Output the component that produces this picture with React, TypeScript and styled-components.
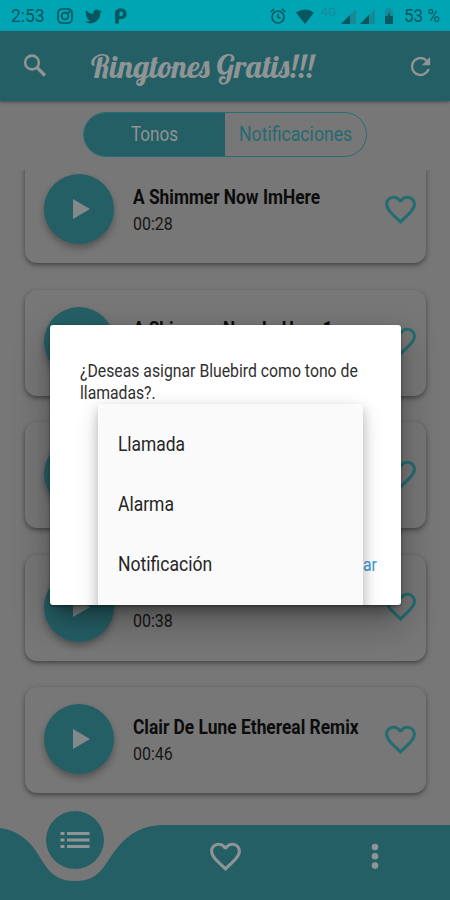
import React, { useLayoutEffect, useRef, useState } from "react";
import styled, { createGlobalStyle } from "styled-components";

const teal = "#255f66";
const grey = "#777777";
const pale = "#8f9495";
const statusInk = "#075660";

const GlobalStyle = createGlobalStyle`
  *, *::before, *::after { box-sizing: border-box; }
  body { margin: 0; background: ${grey}; font-family: Roboto, "Liberation Sans", sans-serif; }
  svg { display: block; flex: none; }
`;

const Screen = styled.div`
  position: relative;
  width: 450px;
  height: 900px;
  overflow: hidden;
  display: flex;
  flex-direction: column;
  background: ${grey};
`;

const FitBox = styled.span<{ $width: number }>`
  display: block;
  flex: none;
  width: ${(p) => p.$width}px;
  white-space: nowrap;
`;

const FitInner = styled.span`
  display: inline-block;
  transform-origin: 0 50%;
`;

/* Condenses a line of text horizontally to the width of its slot. */
function Fit({ width, children }: { width: number; children: string }) {
  const ref = useRef<HTMLSpanElement>(null);
  const [scale, setScale] = useState(1);
  useLayoutEffect(() => {
    if (ref.current) setScale(width / ref.current.offsetWidth);
  }, [width, children]);
  return (
    <FitBox $width={width}>
      <FitInner ref={ref} style={{ transform: `scaleX(${scale})` }}>
        {children}
      </FitInner>
    </FitBox>
  );
}

const StatusBar = styled.div`
  flex: none;
  height: 31px;
  padding: 1px 10px 0 11px;
  display: flex;
  align-items: center;
  justify-content: space-between;
  background: #00a5b4;
  color: ${statusInk};
  font-size: 18.5px;
`;

const StatusGroup = styled.div<{ $gap: number }>`
  display: flex;
  align-items: center;
  gap: ${(p) => p.$gap}px;
`;

const NetworkLabel = styled.span`
  font-size: 11px;
  line-height: 11px;
  margin-top: -7px;
  color: #168b98;
`;

const Header = styled.header`
  flex: none;
  height: 70px;
  padding: 0 15px 0 22px;
  display: flex;
  align-items: center;
  background: ${teal};
  box-shadow: 0 1px 3px rgba(0, 0, 0, 0.4);
  color: ${pale};
`;

const Title = styled.h1`
  margin: 0 auto 0 42px;
  font: normal 400 32px/40px "Lobster", "Liberation Serif", serif;
`;

const Tabs = styled.div`
  flex: none;
  align-self: center;
  width: 284px;
  height: 45px;
  margin: 11px 0 13px;
  display: flex;
  border: 1px solid #256e74;
  border-radius: 23px;
  overflow: hidden;
`;

const Tab = styled.div<{ $active?: boolean }>`
  flex: 1;
  display: flex;
  align-items: center;
  justify-content: center;
  padding-bottom: 1px;
  font-size: 20px;
  color: ${(p) => (p.$active ? pale : "#256a70")};
  background: ${(p) => (p.$active ? teal : "transparent")};
`;

const List = styled.div`
  flex: none;
  height: 655px;
  overflow: hidden;
  display: flex;
  flex-direction: column;
  justify-content: flex-end;
  gap: 26.5px;
  padding: 0 24px 32px 25px;
`;

const Card = styled.article`
  flex: none;
  height: 106px;
  padding: 0 7px 2px 19px;
  display: flex;
  align-items: center;
  border-radius: 12px;
  background: ${grey};
  box-shadow: 0 2px 4px rgba(0, 0, 0, 0.38), 0 3px 8px rgba(0, 0, 0, 0.08);
`;

const Disc = styled.div<{ $size: number }>`
  flex: none;
  width: ${(p) => p.$size}px;
  height: ${(p) => p.$size}px;
  border-radius: 50%;
  display: grid;
  place-items: center;
  background: ${teal};
`;

const PlayDisc = styled(Disc)`
  box-shadow: 0 4px 7px rgba(0, 0, 0, 0.3);
`;

const Meta = styled.div`
  margin: 1px auto 0 19px;
  display: flex;
  flex-direction: column;
  gap: 4px;
  color: #0c0c0c;
`;

const Name = styled.div`
  height: 24px;
  font-size: 20px;
  line-height: 24px;
  font-weight: 700;
`;

const Duration = styled.div`
  height: 22px;
  font-size: 18px;
  line-height: 22px;
  color: #161616;
`;

const Nav = styled.nav`
  position: relative;
  flex: none;
  height: 75px;
  display: grid;
  grid-template-columns: repeat(3, 1fr);
  justify-items: center;
  align-items: start;
`;

const Wave = styled.svg`
  position: absolute;
  inset: 0;
`;

const NavItem = styled.div<{ $top: number }>`
  position: relative;
  margin-top: ${(p) => p.$top}px;
`;

const Dialog = styled.section`
  position: absolute;
  left: 50px;
  top: 325px;
  width: 351px;
  height: 280px;
  padding: 35px 24px 0 30px;
  border-radius: 3px;
  background: #fff;
  box-shadow: 0 11px 15px -7px rgba(0, 0, 0, 0.4), 0 16px 35px 4px rgba(0, 0, 0, 0.24),
    0 1px 3px rgba(0, 0, 0, 0.4);
`;

const Message = styled.div`
  font-size: 18px;
  line-height: 21.5px;
  color: #303030;
`;

const Action = styled.div`
  margin-top: 151px;
  display: flex;
  justify-content: flex-end;
  font-size: 18px;
  line-height: 22px;
  color: #3897d5;
`;

const MenuClip = styled.div`
  position: absolute;
  inset: 0;
  overflow: hidden;
  border-radius: 3px;
`;

const Menu = styled.div`
  position: absolute;
  left: 48px;
  top: 79px;
  width: 265px;
  height: 221px;
  padding-top: 10px;
  background: #fafafa;
  box-shadow: 0 5px 10px rgba(0, 0, 0, 0.2), 0 8px 22px rgba(0, 0, 0, 0.16);
`;

const MenuItem = styled.div`
  height: 60px;
  padding-left: 20px;
  display: flex;
  align-items: center;
  font-size: 20px;
  color: #252525;
`;

const Heart = ({ size, color }: { size: number; color: string }) => (
  <svg width={size} height={size} viewBox="0 0 24 24" fill={color}>
    <path d="M16.5 3c-1.74 0-3.41.81-4.5 2.09C10.91 3.81 9.24 3 7.5 3 4.42 3 2 5.42 2 8.5c0 3.78 3.4 6.86 8.55 11.54L12 21.35l1.45-1.32C18.6 15.36 22 12.28 22 8.5 22 5.42 19.58 3 16.5 3zm-4.4 15.55l-.1.1-.1-.1C7.14 14.24 4 11.39 4 8.5 4 6.5 5.5 5 7.5 5c1.54 0 3.04.99 3.57 2.36h1.87C13.46 5.99 14.96 5 16.5 5c2 0 3.5 1.5 3.5 3.5 0 2.89-3.14 5.74-7.9 10.05z" />
  </svg>
);

const Signal = () => (
  <svg width="15" height="15" viewBox="0 0 15 15">
    <path d="M0 15 15 0v15z" fill="#168b98" />
    <path d="M0 15 9 6v9z" fill={statusInk} />
  </svg>
);

const tracks = [
  { name: "A Shimmer Now ImHere", width: 187, time: "00:28" },
  { name: "A Shimmer Now ImHere 1", width: 200 },
  {},
  { time: "00:38" },
  { name: "Clair De Lune Ethereal Remix", width: 226, time: "00:46" },
] as { name?: string; width?: number; time?: string }[];

export default function App() {
  return (
    <>
      <GlobalStyle />
      <Screen>
        <StatusBar>
          <StatusGroup $gap={12}>
            <Fit width={34}>2:53</Fit>
            <svg width="16" height="16" viewBox="0 0 16 16" fill="none" stroke={statusInk} strokeWidth="1.7">
              <rect x="1" y="1" width="14" height="14" rx="4" />
              <circle cx="8" cy="8" r="3.4" />
              <circle cx="12" cy="4" r=".4" />
            </svg>
            <svg width="17" height="17" viewBox="0 0 24 24" fill={statusInk}>
              <path d="M24 4.6a10 10 0 0 1-2.8.8 5 5 0 0 0 2.1-2.7 10 10 0 0 1-3.1 1.2 4.9 4.9 0 0 0-8.4 4.5A14 14 0 0 1 1.7 3.2a4.9 4.9 0 0 0 1.5 6.5 4.9 4.9 0 0 1-2.2-.6v.1a4.9 4.9 0 0 0 3.9 4.8 5 5 0 0 1-2.2.1 4.9 4.9 0 0 0 4.6 3.4A9.9 9.9 0 0 1 0 19.5a14 14 0 0 0 21.5-12.4A10 10 0 0 0 24 4.6z" />
            </svg>
            <svg width="13" height="16" viewBox="0 0 13 16" fill={statusInk}>
              <path
                fillRule="evenodd"
                d="M1 5.2C1 2 3.5.5 7 .5c3.3 0 5.6 2 5.6 5.2S10.300 11 7.200 11H5v4.500H1.200V8.800L1 8zM5.600 3.500v4.800h1.200c1.500 0 2.300-1 2.300-2.500S8.300 3.500 6.800 3.500z"
              />
            </svg>
          </StatusGroup>
          <StatusGroup $gap={4}>
            <svg width="16" height="16" viewBox="0 0 16 16" fill="none" stroke={statusInk} strokeWidth="1.6">
              <circle cx="8" cy="9" r="6" />
              <path d="M8 5.5V9l2.5 1.5M.8 3.8 4 1M15.2 3.8 12 1" />
            </svg>
            <svg width="27" height="15" viewBox="0 0 27 15" fill={statusInk}>
              <path d="M6 3.500Q15-2.500 24 3.500L15 15z" />
            </svg>
            <NetworkLabel>
              <Fit width={16}>4G</Fit>
            </NetworkLabel>
            <Signal />
            <Signal />
            <svg width="21" height="16" viewBox="0 0 21 16">
              <path d="M6 2h2V0h4v2h2v14H6z" fill="#168b98" />
              <path d="M6 8h2l2 3 2-3h2v8H6z" fill={statusInk} />
              <path d="M10.5 4 8 9h2v4l3-5h-2z" fill={statusInk} />
            </svg>
            <Fit width={36}>53 %</Fit>
          </StatusGroup>
        </StatusBar>

        <Header>
          <svg width="27" height="27" viewBox="0 0 27 27" fill="none" stroke={pale} strokeWidth="2.6">
            <circle cx="10" cy="9.500" r="6.900" />
            <path d="m15 14.500 8 8" strokeWidth="3.2" />
          </svg>
          <Title>
            <Fit width={223}>Ringtones Gratis!!!</Fit>
          </Title>
          <svg width="29" height="29" viewBox="0 0 24 24" fill={pale}>
            <path d="M17.65 6.35A7.96 7.96 0 0 0 12 4a8 8 0 1 0 7.73 10h-2.08A6 6 0 1 1 12 6c1.66 0 3.14.69 4.22 1.78L13 11h7V4l-2.35 2.35z" />
          </svg>
        </Header>

        <Tabs>
          <Tab $active>
            <Fit width={47}>Tonos</Fit>
          </Tab>
          <Tab>
            <Fit width={113}>Notificaciones</Fit>
          </Tab>
        </Tabs>

        <List>
          {tracks.map((t, i) => (
            <Card key={i}>
              <PlayDisc $size={70}>
                <svg width="21" height="22" viewBox="0 0 21 22">
                  <path d="M4 1v20l17-10z" fill="#838889" />
                </svg>
              </PlayDisc>
              <Meta>
                <Name>{t.name && <Fit width={t.width ?? 187}>{t.name}</Fit>}</Name>
                <Duration>{t.time && <Fit width={40}>{t.time}</Fit>}</Duration>
              </Meta>
              <Heart size={37} color="#256c70" />
            </Card>
          ))}
        </List>

        <Nav>
          <Wave width="450" height="75" viewBox="0 0 450 75">
            <path
              d="M0 3C14 5 24 11 33 22C45 38 49 56 75 56C102 56 104 38 118 22C129 9 142 0 165 0H450V75H0z"
              fill={teal}
            />
          </Wave>
          <NavItem $top={-14}>
            <Disc $size={58}>
              <svg width="30" height="18" viewBox="0 0 30 18" stroke={pale} strokeWidth="3">
                <path d="M.5 2.5h4M7 2.5h22.500M.5 9h4M7 9h22.500M.5 15.500h4M7 15.500h22.500" />
              </svg>
            </Disc>
          </NavItem>
          <NavItem $top={13}>
            <Heart size={37} color={pale} />
          </NavItem>
          <NavItem $top={18}>
            <svg width="8" height="27" viewBox="0 0 8 27" fill={pale}>
              <circle cx="4" cy="4" r="3.3" />
              <circle cx="4" cy="13.3" r="3.3" />
              <circle cx="4" cy="22.6" r="3.3" />
            </svg>
          </NavItem>
        </Nav>

        <Dialog>
          <Message>
            <Fit width={278}>¿Deseas asignar Bluebird como tono de</Fit>
            <Fit width={76}>llamadas?.</Fit>
          </Message>
          <Action>
            <Fit width={14}>ar</Fit>
          </Action>
          <MenuClip>
            <Menu>
              <MenuItem>
                <Fit width={67}>Llamada</Fit>
              </MenuItem>
              <MenuItem>
                <Fit width={56}>Alarma</Fit>
              </MenuItem>
              <MenuItem>
                <Fit width={94}>Notificación</Fit>
              </MenuItem>
            </Menu>
          </MenuClip>
        </Dialog>
      </Screen>
    </>
  );
}
